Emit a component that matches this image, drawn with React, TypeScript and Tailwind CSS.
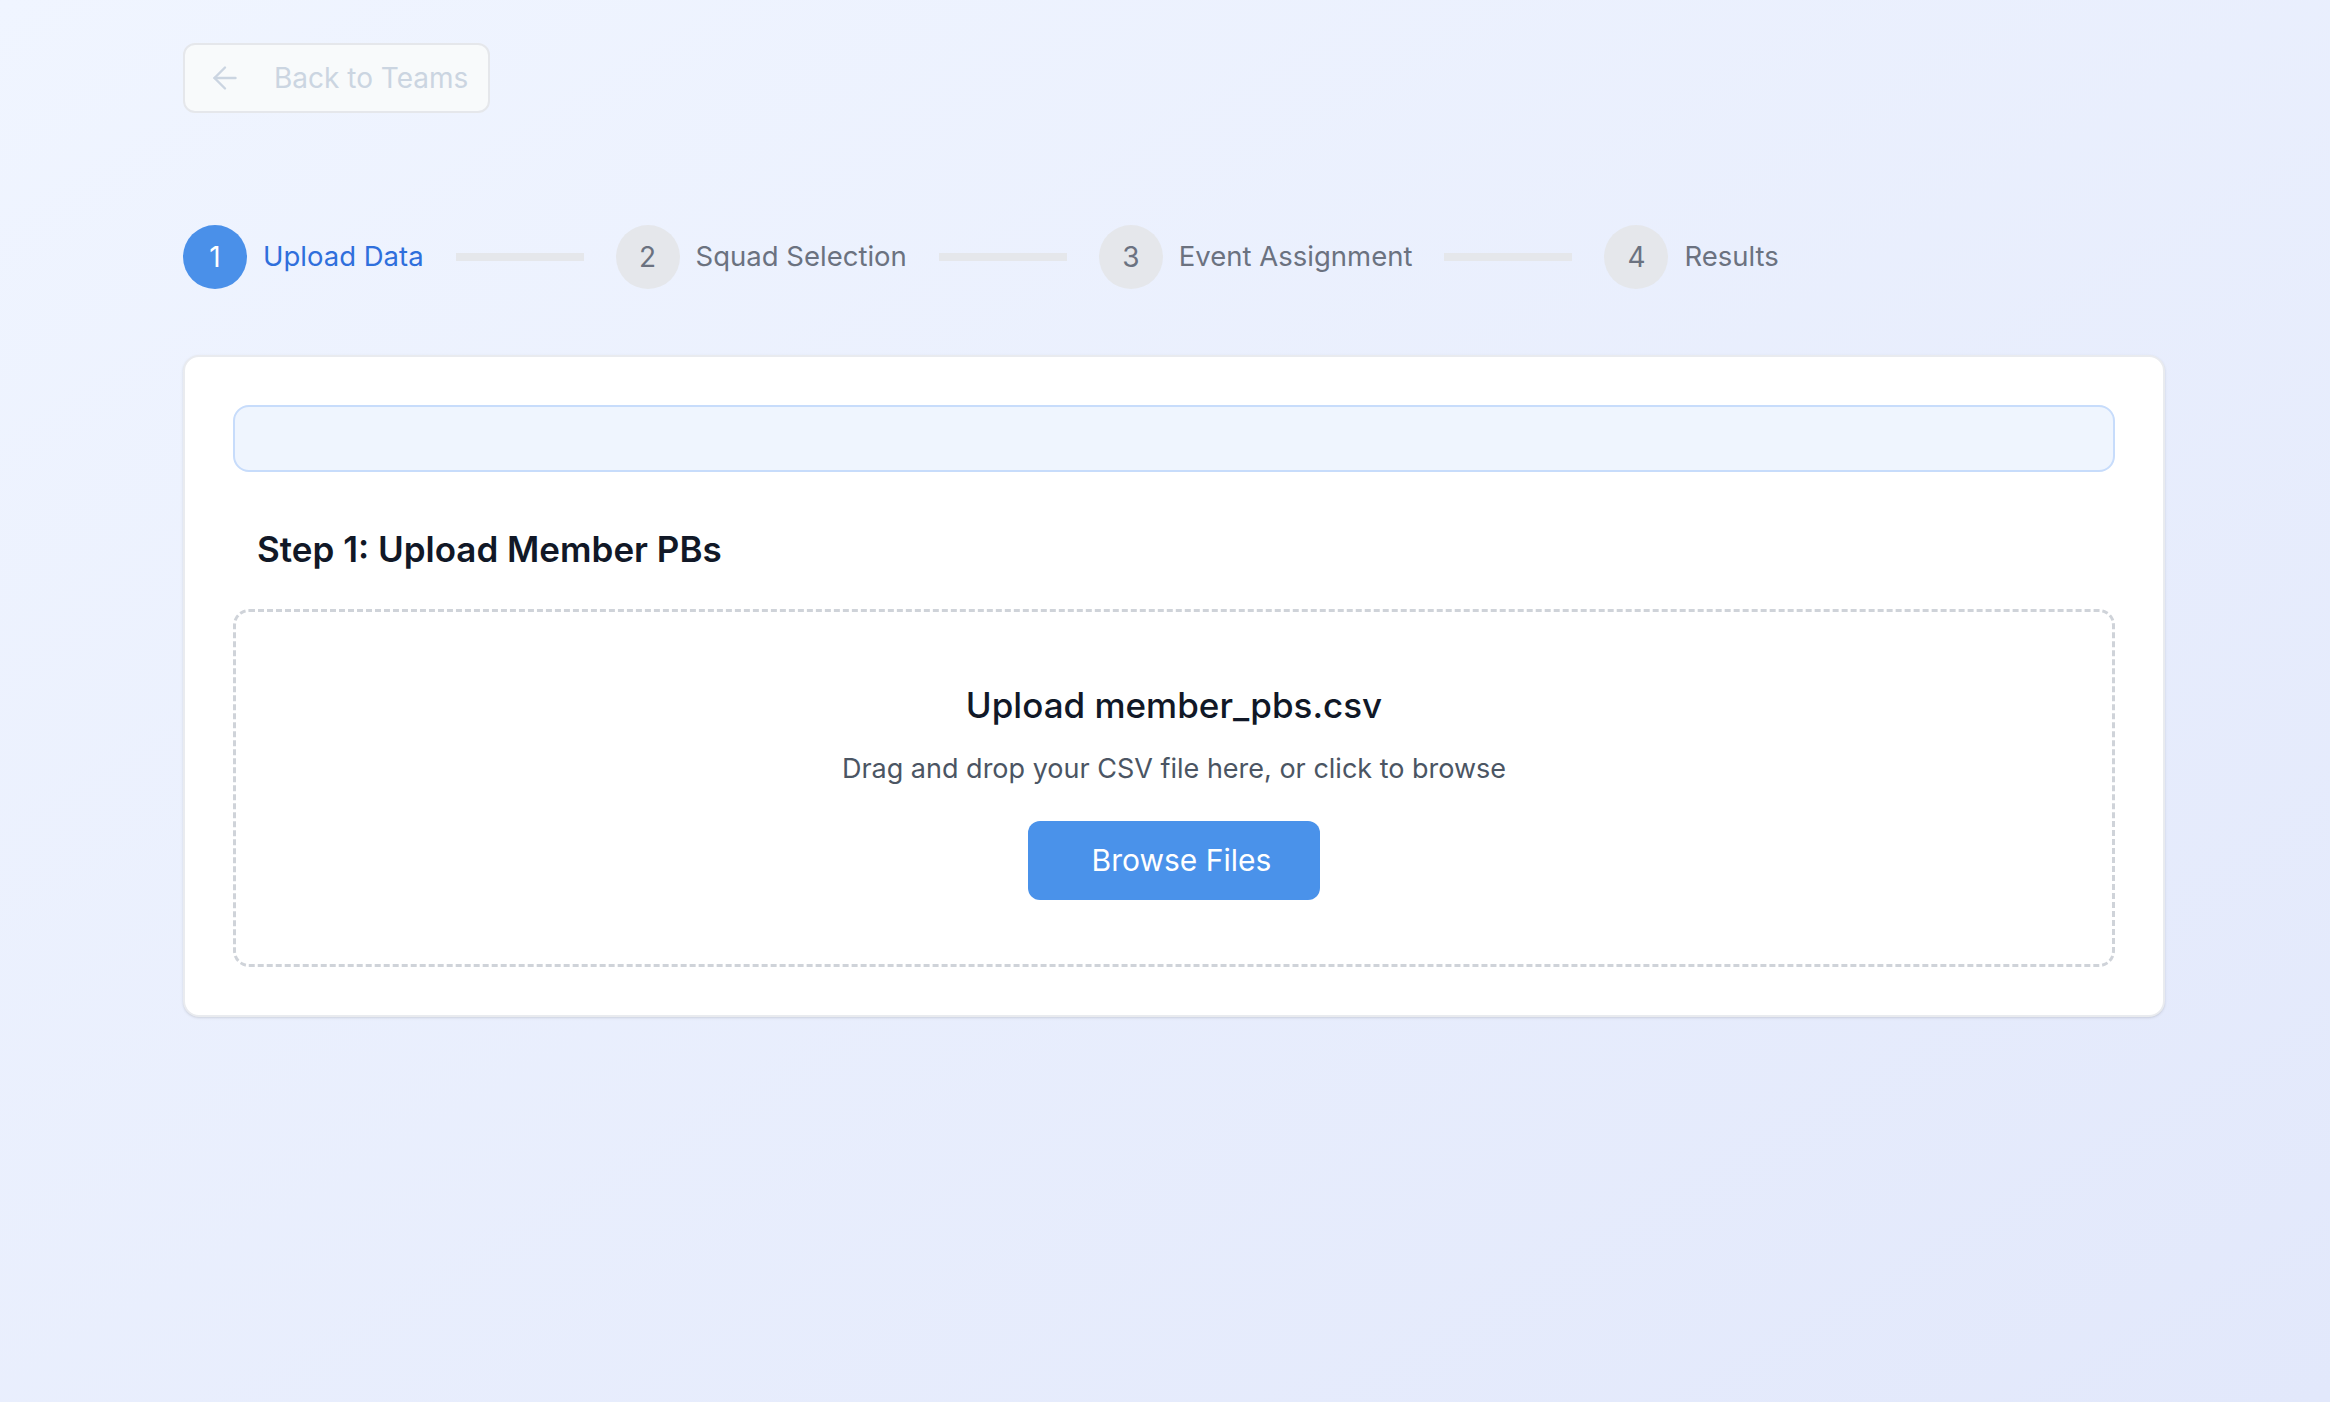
import { ArrowLeft } from 'lucide-react'

const steps = [
  { n: 1, label: 'Upload Data' },
  { n: 2, label: 'Squad Selection' },
  { n: 3, label: 'Event Assignment' },
  { n: 4, label: 'Results' }
]

function App(): JSX.Element {
  const current = 1

  return (
    <div
      className="min-h-screen bg-gradient-to-br from-[#f0f5ff] to-[#e2e8fb] pl-[183px] pr-[165px] pt-[43px] pb-20"
      style={{ fontFamily: 'Inter, "Noto Sans", sans-serif' }}
    >
      <button
        disabled
        className="flex items-center h-[70px] w-[307px] pl-[22px] rounded-[12px] border-2 border-[#e5e7eb] bg-[#f8fafb] text-[#cbd5e1] text-[28px]"
      >
        <ArrowLeft size={36} strokeWidth={1.6} />
        <span className="ml-[31px]">Back to Teams</span>
      </button>

      <div className="flex items-center mt-[112px] h-16">
        {steps.map((s, i) => (
          <div key={s.n} className="flex items-center">
            <div className="flex items-center gap-4">
              <div
                className={
                  'w-16 h-16 rounded-full flex items-center justify-center text-[28px] ' +
                  (s.n === current ? 'bg-[#4a90e9] text-white' : 'bg-[#e5e7eb] text-[#6b7280]')
                }
              >
                {s.n}
              </div>
              <span
                className={
                  'text-[27.5px] ' + (s.n === current ? 'text-[#2f6fdc]' : 'text-[#6b7280]')
                }
              >
                {s.label}
              </span>
            </div>
            {i < steps.length - 1 && <div className="w-[128px] h-[8px] bg-[#e5e7eb] mx-[32px]"></div>}
          </div>
        ))}
      </div>

      <div className="mt-[66px] bg-white rounded-[16px] border-2 border-[#e9ebef] shadow-sm p-[48px]">
        <div className="h-[67px] rounded-[16px] border-2 border-[#c7dcfb] bg-[#eff5fe]"></div>

        <h2 className="mt-[53px] ml-[24px] text-[35px] leading-[48px] font-semibold text-[#111827]">
          Step 1: Upload Member PBs
        </h2>

        <div className="mt-[36px] border-[3px] border-dashed border-[#cfd3d9] rounded-[16px] pt-[69px] pb-[64px] flex flex-col items-center">
          <h3 className="text-[35px] leading-[48px] font-medium text-[#111827]">
            Upload member_pbs.csv
          </h3>
          <p className="mt-[20px] text-[27px] leading-[40px] text-[#4b5563]">
            Drag and drop your CSV file here, or click to browse
          </p>
          <button className="mt-[32px] h-[79px] pl-[64px] pr-[49px] rounded-[12px] bg-[#4a92ea] text-white text-[30px]">
            Browse Files
          </button>
        </div>
      </div>
    </div>
  )
}

export default App
